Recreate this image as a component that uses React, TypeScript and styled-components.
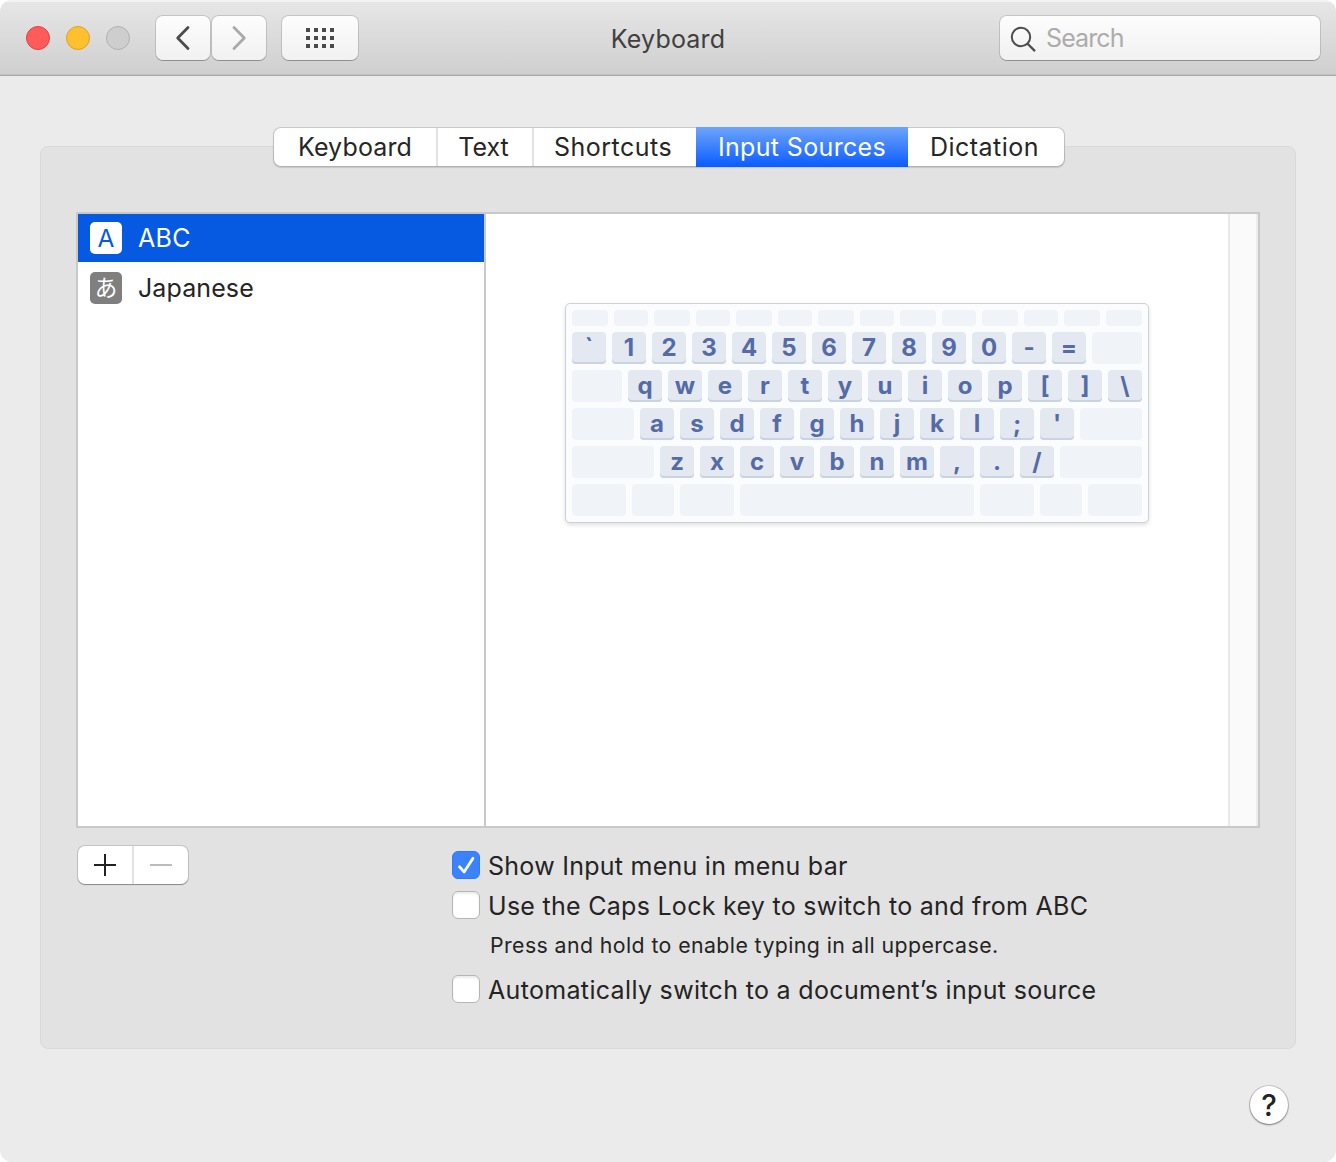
import React from "react";
import styled, { createGlobalStyle, css } from "styled-components";

const GlobalStyle = createGlobalStyle`
  * { box-sizing: border-box; }
  body { margin: 0; background: #fff; }
`;

const Window = styled.main`
  width: 1336px;
  height: 1162px;
  display: flex;
  flex-direction: column;
  overflow: hidden;
  border-radius: 12px;
  background: #ebebeb;
  color: #242424;
  font-family: Inter, "Noto Sans CJK JP", sans-serif;
  font-size: 25px;
  line-height: 30px;
  white-space: nowrap;
`;

const Label = styled.span<{ $track?: number }>`
  letter-spacing: ${(p) => p.$track ?? 0}px;
`;

const Toolbar = styled.header`
  flex: none;
  height: 76px;
  display: grid;
  grid-template-columns: 1fr auto 1fr;
  align-items: center;
  padding: 0 16px;
  background: linear-gradient(#e7e7e7, #cfcfcf);
  border-bottom: 1px solid #a9a9a9;
  box-shadow: inset 0 2px 0 #f3f3f3, inset 0 -1px 0 #c1c1c1;
`;

const ToolbarSide = styled.div`
  display: flex;
  align-items: center;
`;

const Lights = styled.div`
  display: flex;
  gap: 16px;
  margin: 0 26px 0 10px;
`;

const Light = styled.span<{ $fill: string; $edge: string }>`
  width: 24px;
  height: 24px;
  border-radius: 50%;
  background: ${(p) => p.$fill};
  border: 1px solid ${(p) => p.$edge};
`;

const raised = css`
  border: 0;
  padding: 0;
  border-radius: 7px;
  background: linear-gradient(#fdfdfd, #f1f1f1);
  box-shadow: 0 0 0 1px rgba(0, 0, 0, 0.13), 0 1px 0 rgba(0, 0, 0, 0.22);
`;

const ToolButton = styled.button<{ $width: number; $gap: number }>`
  ${raised}
  width: ${(p) => p.$width}px;
  height: 44px;
  margin-right: ${(p) => p.$gap}px;
  display: grid;
  place-items: center;
`;

const Title = styled.h1`
  margin: 2px 0 0;
  font: inherit;
  color: #404040;
`;

const Search = styled.label`
  ${raised}
  width: 320px;
  height: 44px;
  margin-left: auto;
  padding-left: 10px;
  display: flex;
  align-items: center;
  gap: 9px;
  color: #acacac;
`;

const Content = styled.div`
  flex: 1;
  display: flex;
  flex-direction: column;
  padding: 51px 40px 37px;
`;

const Tabs = styled.nav`
  position: relative;
  align-self: center;
  width: 792px;
  height: 40px;
  margin: 0 -1px -21px 1px;
  padding: 1px;
  display: flex;
  border-radius: 8px;
  background: linear-gradient(#c9c9c9, #b0b0b0);
  box-shadow: 0 1px 1px rgba(0, 0, 0, 0.12);
`;

const Tab = styled.button<{ $width: number; $inset?: number; $selected?: boolean; $divided?: boolean }>`
  width: ${(p) => p.$width}px;
  height: 38px;
  padding: 0 ${(p) => p.$inset ?? 0}px 0 0;
  border: 0;
  border-right: ${(p) => (p.$divided ? "2px solid #e2e2e2" : "0")};
  background: #fff;
  color: #262626;
  font: inherit;
  &:first-child { border-radius: 7px 0 0 7px; }
  &:last-child { border-radius: 0 7px 7px 0; }
  ${(p) =>
    p.$selected &&
    css`
      height: 40px;
      margin-top: -1px;
      color: #fff;
      background: linear-gradient(#6ea4fb, #0a5cff);
    `}
`;

const Group = styled.section`
  height: 903px;
  padding: 65px 35px 0;
  border: 1px solid #d9d9d9;
  border-radius: 8px;
  background: #e2e2e2;
`;

const SplitView = styled.div`
  height: 616px;
  width: 1184px;
  display: flex;
  border: 2px solid #c9c9c9;
  background: #fff;
`;

const SourceList = styled.div`
  width: 408px;
  display: flex;
  flex-direction: column;
  gap: 2px;
  border-right: 2px solid #c9c9c9;
`;

const Source = styled.div<{ $selected?: boolean }>`
  height: 48px;
  padding-left: 12px;
  display: flex;
  align-items: center;
  gap: 16px;
  background: ${(p) => (p.$selected ? "#065ae2" : "#fff")};
  color: ${(p) => (p.$selected ? "#fff" : "#242424")};
`;

const Badge = styled.span<{ $selected?: boolean }>`
  width: 32px;
  height: 32px;
  display: grid;
  place-items: center;
  border-radius: 5px;
  background: ${(p) => (p.$selected ? "#fff" : "#7f7f7f")};
  color: ${(p) => (p.$selected ? "#065ae2" : "#fff")};
  font-size: ${(p) => (p.$selected ? 24.5 : 22.5)}px;
  line-height: 32px;
`;

const Preview = styled.div`
  flex: 1;
  display: flex;
  justify-content: center;
  align-items: flex-start;
  padding-top: 89px;
`;

const Scroller = styled.div`
  width: 30px;
  border-left: 2px solid #e8e8e8;
  border-right: 2px solid #ededed;
  background: #fafafa;
`;

const Keyboard = styled.div`
  width: 584px;
  height: 220px;
  padding: 6px;
  display: flex;
  flex-direction: column;
  gap: 6px;
  border: 1px solid #ccd2da;
  border-radius: 5px;
  background: #fbfcfe;
  box-shadow: 0 2px 4px rgba(0, 0, 0, 0.13);
`;

const KeyRow = styled.div`
  display: flex;
  gap: 6px;
`;

const Key = styled.span<{ $width?: number; $height?: number; $blank?: boolean }>`
  width: ${(p) => p.$width ?? 34}px;
  height: ${(p) => p.$height ?? 32}px;
  border-radius: 4px;
  background: ${(p) => (p.$blank ? "#f0f3f8" : "#e3e8f1")};
  box-shadow: ${(p) => (p.$blank ? "none" : "inset 0 -2px 0 #cad3e4")};
  color: #546ba7;
  font-size: 24px;
  font-weight: 750;
  line-height: 31px;
  text-align: center;
`;

const Footer = styled.div`
  display: flex;
  align-items: flex-start;
  padding: 18px 0 0 2px;
`;

const Segments = styled.div`
  display: flex;
  width: 110px;
  height: 38px;
  margin-right: 264px;
  border-radius: 7px;
  background: #fff;
  box-shadow: 0 0 0 1px rgba(0, 0, 0, 0.13), 0 1px 1px rgba(0, 0, 0, 0.3);
`;

const Segment = styled.button<{ $divided?: boolean }>`
  width: 55px;
  padding: 0;
  display: grid;
  place-items: center;
  background: none;
  border: 0;
  border-right: ${(p) => (p.$divided ? "2px solid #e2e2e2" : "0")};
  ${(p) => p.$divided && "width: 56px;"}
`;

const Options = styled.div`
  display: flex;
  flex-direction: column;
  padding-top: 5px;
`;

const Option = styled.label`
  height: 28px;
  display: flex;
  align-items: center;
  gap: 8px;
  margin-bottom: 12px;
  ${Label} { padding-top: 2px; }
`;

const Box = styled.span<{ $checked?: boolean }>`
  width: 28px;
  height: 28px;
  display: grid;
  place-items: center;
  border-radius: 6px;
  border: 1px solid ${(p) => (p.$checked ? "#3478f6" : "#b5b5b5")};
  background: ${(p) => (p.$checked ? "#3b82fd" : "#fff")};
  box-shadow: ${(p) => (p.$checked ? "none" : "inset 0 2px 2px rgba(0, 0, 0, 0.08)")};
`;

const Hint = styled.p`
  height: 44px;
  margin: 0 0 0 38px;
  font-size: 21.3px;
  line-height: 29px;
`;

const Help = styled.button`
  width: 38px;
  height: 38px;
  margin: 37px 8px 0 auto;
  padding: 0;
  border: 0;
  border-radius: 50%;
  background: #fff;
  box-shadow: 0 0 0 1px rgba(0, 0, 0, 0.15), 0 1px 2px rgba(0, 0, 0, 0.4);
  color: #222;
  font: 450 29.5px/38px Inter, sans-serif;
`;

const tabs = [
  { name: "Keyboard", width: 164, track: 0.15, inset: 0, divided: true },
  { name: "Text", width: 96, track: 0, inset: 3, divided: true },
  { name: "Shortcuts", width: 162, track: 0.5, inset: 4 },
  { name: "Input Sources", width: 212, track: 0.35, selected: true },
  { name: "Dictation", width: 156, track: 0.5, inset: 3 },
];

type RowSpec = { before?: number; keys: string; after?: number };

const rows: RowSpec[] = [
  { keys: "`1234567890-=", after: 50 },
  { before: 50, keys: "qwertyuiop[]\\" },
  { before: 62, keys: "asdfghjkl;'", after: 62 },
  { before: 82, keys: "zxcvbnm,./", after: 82 },
];

const functionKeys = [36, 34, 36, 34, 36, 34, 36, 34, 36, 34, 36, 34, 36, 36];
const bottomKeys = [54, 42, 54, 234, 54, 42, 54];

function Chevron({ forward }: { forward?: boolean }) {
  return (
    <svg width="54" height="44" viewBox="0 0 54 44" fill="none" stroke={forward ? "#a9a9a9" : "#4c4c4c"} strokeWidth="2.8" strokeLinecap="round" strokeLinejoin="round">
      <path d={forward ? "M22 11.5 32.3 22 22 32.5" : "M32 11.5 21.7 22 32 32.5"} />
    </svg>
  );
}

function GridIcon() {
  return (
    <svg width="28" height="20" fill="#4a4a4a">
      {[0, 8, 16].map((y) => [0, 8, 16, 24].map((x) => <rect key={`${x}-${y}`} x={x} y={y} width="4" height="4" />))}
    </svg>
  );
}

export default function App() {
  return (
    <>
      <GlobalStyle />
      <Window>
        <Toolbar>
          <ToolbarSide>
            <Lights>
              <Light $fill="#fe5b5a" $edge="#e2403f" />
              <Light $fill="#fdc130" $edge="#dfa023" />
              <Light $fill="#cecece" $edge="#b0b0b0" />
            </Lights>
            <ToolButton $width={54} $gap={2} aria-label="Back"><Chevron /></ToolButton>
            <ToolButton $width={54} $gap={16} aria-label="Forward"><Chevron forward /></ToolButton>
            <ToolButton $width={76} $gap={0} aria-label="Show all"><GridIcon /></ToolButton>
          </ToolbarSide>
          <Title><Label $track={0.2}>Keyboard</Label></Title>
          <ToolbarSide>
            <Search>
              <svg width="27" height="28" viewBox="0 0 27 28" fill="none" stroke="#4d4d4d" strokeWidth="2">
                <circle cx="11" cy="13" r="9.2" />
                <path d="m17.6 19.7 7.4 7.4" strokeWidth="2.3" />
              </svg>
              <Label $track={-0.9}>Search</Label>
            </Search>
          </ToolbarSide>
        </Toolbar>
        <Content>
          <Tabs>
            {tabs.map((t) => (
              <Tab key={t.name} $width={t.width} $inset={t.inset} $selected={t.selected} $divided={t.divided}>
                <Label $track={t.track}>{t.name}</Label>
              </Tab>
            ))}
          </Tabs>
          <Group>
            <SplitView>
              <SourceList>
                <Source $selected><Badge $selected>A</Badge><Label $track={0.3}>ABC</Label></Source>
                <Source><Badge>あ</Badge><Label $track={0.1}>Japanese</Label></Source>
              </SourceList>
              <Preview>
                <Keyboard>
                  <KeyRow>{functionKeys.map((w, i) => <Key key={i} $blank $width={w} $height={16} />)}</KeyRow>
                  {rows.map((row) => (
                    <KeyRow key={row.keys}>
                      {row.before && <Key $blank $width={row.before} />}
                      {row.keys.split("").map((k) => <Key key={k}>{k}</Key>)}
                      {row.after && <Key $blank $width={row.after} />}
                    </KeyRow>
                  ))}
                  <KeyRow>{bottomKeys.map((w, i) => <Key key={i} $blank $width={w} />)}</KeyRow>
                </Keyboard>
              </Preview>
              <Scroller />
            </SplitView>
            <Footer>
              <Segments>
                <Segment $divided aria-label="Add">
                  <svg width="22" height="22" stroke="#222" strokeWidth="2"><path d="M0 11h22M11 0v22" /></svg>
                </Segment>
                <Segment aria-label="Remove">
                  <svg width="22" height="22" stroke="#bdbdbd" strokeWidth="2"><path d="M0 11h22" /></svg>
                </Segment>
              </Segments>
              <Options>
                <Option>
                  <Box $checked>
                    <svg width="26" height="26" viewBox="0 0 26 26" fill="none" stroke="#fff" strokeWidth="2.8" strokeLinecap="round" strokeLinejoin="round">
                      <path d="m6.5 14.7 4.6 5.2L20 6.3" />
                    </svg>
                  </Box>
                  <Label $track={0.26}>Show Input menu in menu bar</Label>
                </Option>
                <Option><Box /><Label $track={0.28}>Use the Caps Lock key to switch to and from ABC</Label></Option>
                <Hint><Label $track={0.41}>Press and hold to enable typing in all uppercase.</Label></Hint>
                <Option><Box /><Label $track={0.33}>Automatically switch to a document’s input source</Label></Option>
              </Options>
            </Footer>
          </Group>
          <Help>?</Help>
        </Content>
      </Window>
    </>
  );
}
